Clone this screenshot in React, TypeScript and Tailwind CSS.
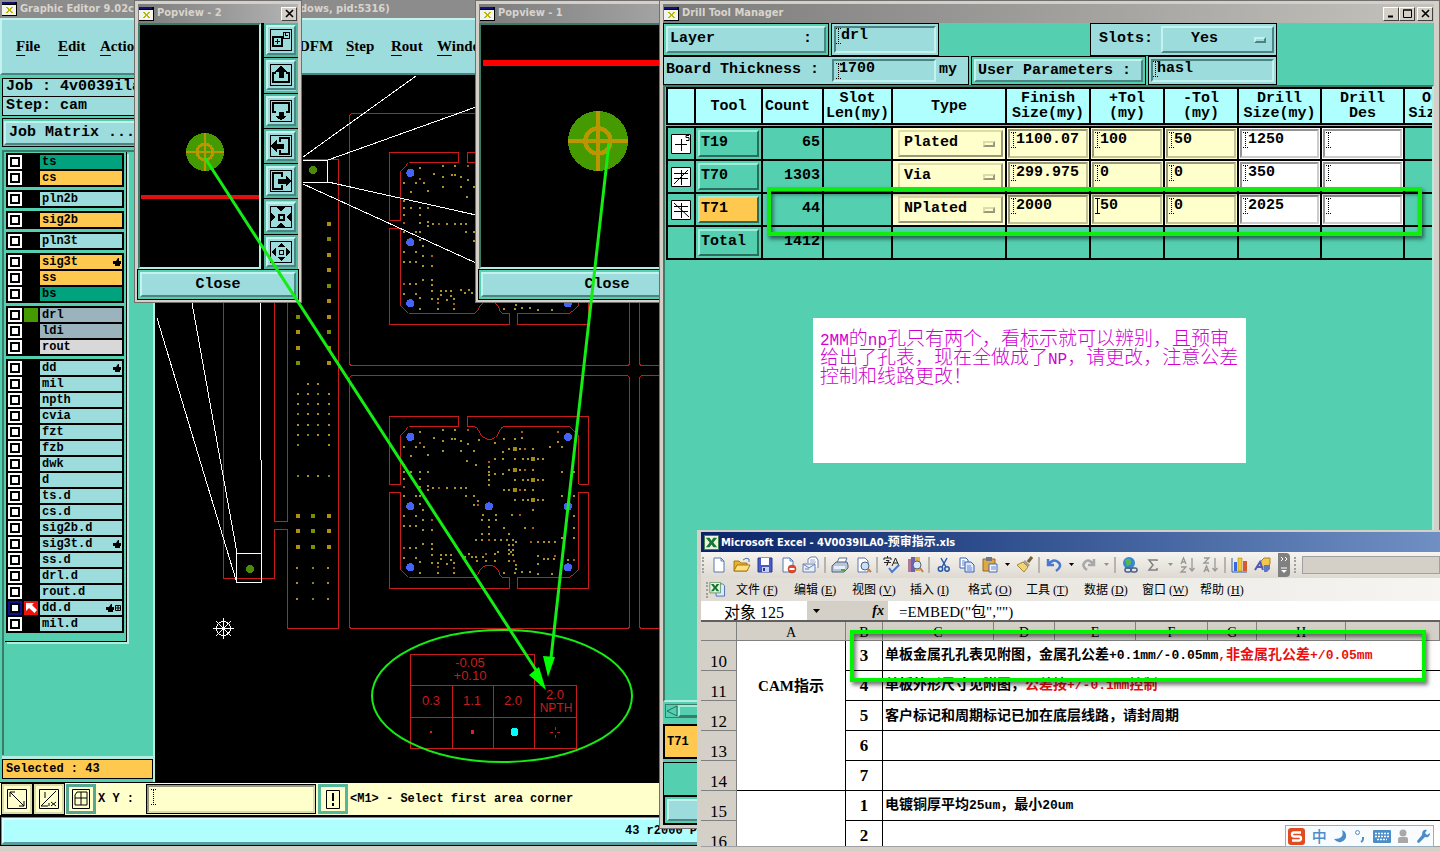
import type { ReactNode } from 'react'

const TEAL_RAISED = 'border-2 border-t-[#c4f2ee] border-l-[#c4f2ee] border-r-[#4c8484] border-b-[#4c8484] bg-[#9cdcdc]'
const TEAL_SUNKEN = 'border-2 border-t-[#4c8484] border-l-[#4c8484] border-r-[#c4f2ee] border-b-[#c4f2ee] bg-[#9cdcdc]'
const MONO = "font-['Liberation_Mono',monospace] font-bold"
const TAHOMA = "font-['DejaVu_Sans_Condensed','DejaVu_Sans','Noto_Sans_CJK_SC',sans-serif] font-bold"

type Layer = { name: string; bg: string; hand?: boolean; grid?: boolean; swatch?: boolean; active?: boolean }

const LIGHT = 'bg-[#9cdcdc]'
const ORANGE = 'bg-[#ffc84f]'
const GREEN = 'bg-[#00a37e]'

const layerGroups: Layer[][] = [
  [{ name: 'ts', bg: GREEN }, { name: 'cs', bg: ORANGE }],
  [{ name: 'pln2b', bg: LIGHT }],
  [{ name: 'sig2b', bg: ORANGE }],
  [{ name: 'pln3t', bg: LIGHT }],
  [{ name: 'sig3t', bg: ORANGE, hand: true }, { name: 'ss', bg: ORANGE }, { name: 'bs', bg: GREEN }],
  [
    { name: 'drl', bg: 'bg-[#9ab3bc]', swatch: true },
    { name: 'ldi', bg: 'bg-[#9ab3bc]' },
    { name: 'rout', bg: 'bg-[#d8d8d8]' },
  ],
  [
    { name: 'dd', bg: LIGHT, hand: true },
    { name: 'mil', bg: LIGHT },
    { name: 'npth', bg: LIGHT },
    { name: 'cvia', bg: LIGHT },
    { name: 'fzt', bg: LIGHT },
    { name: 'fzb', bg: LIGHT },
    { name: 'dwk', bg: LIGHT },
    { name: 'd', bg: LIGHT },
    { name: 'ts.d', bg: LIGHT },
    { name: 'cs.d', bg: LIGHT },
    { name: 'sig2b.d', bg: LIGHT },
    { name: 'sig3t.d', bg: LIGHT, hand: true },
    { name: 'ss.d', bg: LIGHT },
    { name: 'drl.d', bg: LIGHT },
    { name: 'rout.d', bg: LIGHT },
    { name: 'dd.d', bg: LIGHT, hand: true, grid: true, active: true },
    { name: 'mil.d', bg: LIGHT },
  ],
]

function AppIcon() {
  return (
    <svg width="15" height="14" viewBox="0 0 15 14" className="shrink-0" shapeRendering="crispEdges">
      <rect width="15" height="14" fill="#000" />
      <rect width="13" height="2" fill="#101070" />
      <rect y="3" width="14" height="10" fill="#f4f4ee" />
      <path d="M4 5h2v1h1v1h1V6h1V5h2v1h-1v1H9v2h1v1h1v1H9v-1H8V9H7v1H6v1H4v-1h1V9h1V7H5V6H4z" fill="#b8b800" />
    </svg>
  )
}

function TitleButton({ label, children }: { label: string; children: ReactNode }) {
  return (
    <button aria-label={label} className="flex h-[14px] w-4 items-center justify-center border border-t-white border-l-white border-r-[#404040] border-b-[#404040] bg-[#d4d0c8]">
      <svg width="9" height="9" viewBox="0 0 9 9" stroke="#000" fill="none">{children}</svg>
    </button>
  )
}

const cross = <path d="M1 1l7 7M8 1L1 8" strokeWidth="1.6" />

/* ---------- PCB drawing ---------- */

const pads = `240,276 282,294 309,270 345,270 384,270 417,300 337,297 346,297 363,303 309,303 384,312 192,321 228,321 240,309 252,321
213,348 264,345 309,333 363,333 402,333 381,363 408,376 447,366 447,381 447,396 447,405 447,420 447,435 466,309 493,297 525,297
547,276 547,294 489,336 507,327 466,357 489,357 466,402 489,402 541,327 555,327 579,327 525,357 549,357 564,357 594,357 609,357
507,390 541,390 555,390 579,390 525,420 549,420 564,420 594,420 609,420 493,450 507,450 541,450 555,450 579,450 525,480 549,480
564,480 594,480 609,480 579,510 654,276 654,306 666,321 630,322 666,396 702,396 192,375 192,396 192,417 192,440 213,396 240,396
264,396 240,417 240,440 264,438 264,450 279,444 297,444 321,444 346,444 363,444 378,444 378,468 402,468 414,483 402,496 414,496
192,469 228,469 240,469 240,492 248,510 192,528 228,528 248,540 276,540 192,558 210,558 228,558 248,570 276,570 248,612 276,612
276,627 192,624 210,624 228,624 276,645 192,654 228,654 240,666 276,670 294,669 294,681 294,699 240,699 303,645 318,645 333,645
303,657 333,660 342,669 342,684 342,699 321,672 363,642 387,642 375,651 396,651 408,651 429,651 438,642 411,663 438,663 465,663
465,642 474,636 429,524 468,524 516,524 540,524 426,540 447,540 468,540 447,561 426,582 447,582 408,600 426,600 447,600 465,600
483,600 501,600 519,600 528,606 507,582 493,564 555,564 579,564 507,615 519,615 507,630 513,636 519,630 507,642 519,645 507,663
522,663 528,675 528,687 525,699 492,699 546,696 570,696 594,702 636,702 573,606 594,606 612,606 627,606 646,606 594,648 612,657
624,657 641,657 646,648 594,672 666,469 702,469 702,528 702,564 666,594 702,594 684,660 702,660`
  .split(/\s+/)
  .map((p) => p.split(',').map(Number))

const bigPads = [[525, 327], [579, 358], [525, 389], [579, 420], [525, 450], [579, 480]]
const fiducials = [[211, 291], [684, 291], [211, 499], [447, 499], [684, 499], [211, 682], [684, 682]]

function Board({ y }: { y: number }) {
  return (
    <g transform={`translate(340 ${y}) scale(.33333)`}>
      <g fill="none" stroke="#c81c1c" strokeWidth="3">
        <path d="M356 230H148V433H182V286L206 260H356Z" />
        <path d="M382 230V260H401q10 0 15 12q10 26 32 26t30-24q5-14 15-14H690L716 286V433H746V230Z" />
        <path d="M148 457H182V688L206 712H404q8-4 14-18q10-18 29-18t29 18q4 18 12 18H509V745H148Z" />
        <path d="M532 712H690L716 688V457H746V745H532Z" />
      </g>
      {pads.map(([px, py], i) => (
        <rect key={i} x={px - 3} y={py - 3} width="6" height="6" fill={i % 9 === 4 ? '#a85a20' : '#a89428'} />
      ))}
      {bigPads.map(([px, py], i) => (
        <rect key={i} x={px - 6} y={py - 6} width="12" height="12" fill="#a08a10" />
      ))}
      {fiducials.map(([px, py], i) => (
        <circle key={i} cx={px} cy={py} r="12" fill="#4464f8" />
      ))}
    </g>
  )
}

const stripPads = [
  ...[224, 239, 255, 270, 286, 301, 317, 332, 348, 363].map((y) => [329, y, 4]),
  ...[317, 332, 348, 363].map((y) => [298, y, 4]),
  ...[394, 404, 414, 425, 435, 476].flatMap((y) => [298, 308, 318, 329].map((x) => [x, y, 2])),
  [308, 384, 2], [318, 384, 2], [298, 445, 2], [329, 445, 2],
  ...[516, 531, 547].flatMap((y) => [298, 313, 329].map((x) => [x, y, 4])),
  ...[568, 583, 599].flatMap((y) => [297, 313, 328].map((x) => [x, y, 2])),
]

function PcbCanvas() {
  return (
    <svg className="h-full w-full" role="img" aria-label="PCB panel">
      <g transform="translate(-155 -75)" shapeRendering="crispEdges">
        <g fill="none" stroke="#c81c1c">
          <path d="M223.500 303V578.500H274.500V529.500H287.500V628.500H338.500V159.500H303M274.500 303V521.500H287.500V303" />
          <rect x="349.500" y="113.500" width="280" height="252" rx="3" />
          <rect x="349.500" y="375.500" width="280" height="253" rx="3" />
          <rect x="639.500" y="113.500" width="280" height="252" rx="3" />
          <rect x="639.500" y="375.500" width="280" height="253" rx="3" />
        </g>
        <Board y={76} />
        <Board y={340} />
        {stripPads.map(([x, y, s], i) => (
          <rect key={i} x={x - s / 2} y={y - s / 2} width={s} height={s} fill={i % 3 === 1 ? '#7c8c08' : '#b08c18'} />
        ))}
        <g fill="none" stroke="#fff">
          <path d="M303 157L416 76M328 160L476 107M328 182L476 215M303 184L476 263M303 160.500H327.500V182.500H303" />
          <path d="M157 318L236 580M192 303L237 553M260.500 303V460M261.500 460V582M236.500 553.500H261.500V582.500H236.500Z" />
          <path d="M213 628.500H234M223.500 618V639M216 621L231 636M231 621L216 636" />
          <circle cx="223.500" cy="628.500" r="7" />
        </g>
        <circle cx="250" cy="569" r="4" fill="#4a8c08" />
        <circle cx="313" cy="170" r="4" fill="#4a8c08" />
        <g fill="none" stroke="#c81c1c">
          <path d="M410.500 685.500V654.500H534.500V685.500M410.500 685.500H576.500V748.500H410.500ZM410.500 717.500H576.500M452.500 685.500V748M493.500 685.500V748M534.500 685.500V748" />
          <path d="M555 727v3M555 735v3M550 732h3M557 732h3" />
        </g>
        <rect x="430" y="731" width="2" height="2" fill="#e02020" />
        <circle cx="472.500" cy="732" r="2" fill="#e02020" />
        <circle cx="514.500" cy="732" r="4" fill="#00ffff" />
        <g fill="#c81c1c" textAnchor="middle" className="font-['Liberation_Sans',sans-serif] text-[13px]">
          <text x="470" y="667">-0.05</text>
          <text x="470" y="680">+0.10</text>
          <text x="431" y="705">0.3</text>
          <text x="472" y="705">1.1</text>
          <text x="513" y="705">2.0</text>
          <text x="555" y="699">2.0</text>
          <text x="556" y="712" className="text-[12px]">NPTH</text>
        </g>
      </g>
    </svg>
  )
}

/* ---------- main editor window ---------- */

function LayerRow({ layer }: { layer: Layer }) {
  return (
    <label className="flex h-4 items-center gap-[2px]">
      <input
        type="checkbox"
        aria-label={layer.name}
        className={`h-[14px] w-[14px] shrink-0 appearance-none border-2 bg-white shadow-[inset_0_0_0_2px_#000] ${layer.active ? 'border-[#101090]' : 'border-white'}`}
      />
      <span className={`h-[14px] w-[14px] shrink-0 ${layer.swatch ? 'bg-[#459a00]' : layer.active ? 'bg-[#f01010]' : ''}`}>
        {layer.active && (
          <svg width="14" height="14" viewBox="0 0 14 14" fill="#fff">
            <path d="M2 2h8L8 4l5 5-2.500 3L5 7l-3 3z" />
          </svg>
        )}
      </span>
      <span className={`flex h-[14px] flex-1 items-center pr-px pl-[2px] text-[12px] leading-[14px] ${layer.bg}`}>
        <span className="flex-1">{layer.name}</span>
        {layer.hand && (
          <svg width="8" height="8" viewBox="0 0 8 8"><path d="M0 3h3l2-3h1v3h2v3H7v2H2V6H0z" /></svg>
        )}
        {layer.grid && (
          <svg width="6" height="6" viewBox="0 0 6 6" className="ml-px" fill="none" stroke="#000"><path d="M.5.5h5v5h-5zM3 0v6M0 3h6" /></svg>
        )}
      </span>
    </label>
  )
}

function Sidebar() {
  return (
    <aside className={`flex w-[155px] shrink-0 flex-col border-r-2 border-[#b4ece0] bg-[#54cfb0] pt-[3px] pl-[2px] ${MONO}`}>
      <div className="flex h-[19px] items-center border border-black bg-[#9cdcdc] pl-[3px] text-[15px] whitespace-nowrap">Job : 4v0039ila0</div>
      <div className="flex h-[19px] items-center border border-t-0 border-black bg-[#9cdcdc] pl-[3px] text-[15px]">Step: cam</div>
      <div className="mt-[2px] border border-black p-px">
        <button className={`h-6 w-full pl-[3px] text-left text-[15px] leading-none ${TEAL_RAISED}`}>Job Matrix ...</button>
      </div>
      <div className="mt-[3px] flex-1 border-t-2 border-l-2 border-[#3c7a6a]">
        <div className="ml-px flex w-[122px] flex-col gap-[3px] border-r border-b border-black pt-px pb-2 shadow-[2px_2px_0_#b4ece0]">
          {layerGroups.map((group, i) => (
            <div key={i} className="mr-[2px] ml-px bg-black px-[2px] py-px">
              {group.map((layer) => <LayerRow key={layer.name} layer={layer} />)}
            </div>
          ))}
        </div>
      </div>
      <div className="mt-1 mb-[3px] flex h-5 items-center border border-black bg-[#ffc84f] pl-[3px] text-[12px] shadow-[0_-3px_0_#b4ece0]">Selected : 43</div>
    </aside>
  )
}

function CommandBar() {
  const btn = 'flex w-[30px] items-center justify-center border-2 border-[#dcdca8] bg-[#ffffcc] outline outline-black'
  return (
    <div className={`flex h-[34px] items-stretch gap-[2px] border-y border-black bg-[#ffffcc] py-px pl-[2px] text-[12px] ${MONO}`}>
      <button aria-label="Zoom area" className={btn}>
        <svg width="20" height="20" fill="none" stroke="#000"><path d="M.5.5h19v19H.5zM3 3l14 14M3 8V3h5M17 12v5h-5" /></svg>
      </button>
      <button aria-label="Measure angle" className={btn}>
        <svg width="20" height="20" fill="none" stroke="#000"><path d="M.5.5h19v19H.5zM2 17L17 2M2 17h7M6 3v6M12 13l5 4M17 13l-5 4M10 14v3" /></svg>
      </button>
      <button aria-label="Grid" className="flex w-[30px] items-center justify-center border-[3px] border-[#54a890] bg-[#ffffcc]">
        <svg width="18" height="20" fill="none" stroke="#000"><path d="M.5.5h17v19H.5zM5 3h10v13H3V6zM9 3v13M3 9h12" /></svg>
      </button>
      <label htmlFor="xy" className="flex w-[46px] items-center whitespace-nowrap">X Y :</label>
      <span className="relative flex w-[170px] border border-black">
        <input id="xy" className="w-full border-2 border-t-[#98987c] border-l-[#98987c] border-r-[#dcdcac] border-b-[#dcdcac] bg-[#ffffcc] pl-2 outline-none" />
        <Caret />
      </span>
      <button aria-label="Alert" className="flex w-[30px] items-center justify-center border-[3px] border-[#54b898] bg-[#ffffcc]">
        <svg width="14" height="19" fill="none" stroke="#000"><path d="M.5.5h13v18H.5z" /><path d="M7 3v8M7 13v3" strokeWidth="2" /></svg>
      </button>
      <span className="flex items-center whitespace-nowrap">&lt;M1&gt; - Select first area corner</span>
    </div>
  )
}

/* dotted text cursor of an unfocused field */
function Caret({ solid }: { solid?: boolean }) {
  return (
    <svg width="5" height="16" className="pointer-events-none absolute top-1 left-1" fill="none" stroke="#000">
      <path d="M0 .5h5M2.500 1v14M0 15.500h5" strokeDasharray={solid ? undefined : '1 1'} />
    </svg>
  )
}

const MENUS = [
  ['File', 'w-[42px]'],
  ['Edit', 'w-[42px]'],
  ['Actions', 'w-[199px]'],
  ['DFM', 'w-[47px]'],
  ['Step', 'w-[45px]'],
  ['Rout', 'w-[46px]'],
  ['Windows', 'w-[70px]'],
]

function EditorWindow() {
  return (
    <main className="flex h-full flex-col">
      <header className={`flex h-[18px] items-center bg-[#8c8c8c] pl-[2px] text-[11px] text-[#d8d4cc] ${TAHOMA}`}>
        <AppIcon />
        <span className="w-[283px] pl-[3px] whitespace-nowrap">Graphic Editor 9.02c1</span>
        <span>dows, pid:5316)</span>
      </header>
      <nav className="flex h-[57px] items-center border-2 border-t-[#c4f2ee] border-l-[#c4f2ee] border-b-[#4c8484] bg-[#9cdcdc] pl-[14px] font-['Liberation_Serif',serif] text-[15px] font-bold">
        {MENUS.map(([name, width]) => (
          <button key={name} className={`shrink-0 text-left ${width}`}>
            {name === 'DFM' ? name : <><span className="underline underline-offset-4">{name[0]}</span>{name.slice(1)}</>}
          </button>
        ))}
      </nav>
      <div className="flex min-h-0 flex-1">
        <Sidebar />
        <div className="min-w-0 flex-1 overflow-hidden bg-black"><PcbCanvas /></div>
      </div>
      <CommandBar />
      <footer className={`flex h-[30px] items-center border border-black bg-[#54a0a0] p-px text-[12px] ${MONO}`}>
        <div className="flex h-full w-full items-center border-2 border-t-[#dcffff] border-l-[#dcffff] border-b-[#5c9c9c] bg-[#b0ffff] pl-[621px] whitespace-nowrap">43 r2000 Pos</div>
      </footer>
      <div className="h-[5px] bg-[#d4d0c8]" />
    </main>
  )
}

/* ---------- popviews ---------- */

const popIcons: [string, ReactNode][] = [
  ['Pan to window', <><path d="M3 8h9v9H3z" strokeWidth="2" /><path d="M13.500 3.500h6v6h-6zM15.500 3.500v3h2M5 12.500h5M7.500 10v5" /></>],
  ['Pan up', <><path d="M6 9H3v9h16V9h-3" strokeWidth="2" /><path d="M11 2l5 5h-3v6H9V7H6z" fill="#000" /></>],
  ['Pan down', <><path d="M6 12H3V3h16v9h-3" strokeWidth="2" /><path d="M11 20l5-4h-3v-4H9v4H6z" fill="#000" /></>],
  ['Pan left', <><path d="M10 7V3h9v16h-9v-4" strokeWidth="2" /><path d="M1 11l5-5v3h7v4H6v3z" fill="#000" /></>],
  ['Pan right', <><path d="M12 7V3H3v16h9v-4" strokeWidth="2" /><path d="M21 11l-5-5v3H8v4h8v3z" fill="#000" /></>],
  ['Zoom in', <><path d="M9 9h5v5H9z" strokeWidth="2" /><path d="M6 1h10l-5 4zM6 21h10l-5-4zM1 6v10l4-5zM21 6v10l-4-5z" fill="#000" stroke="none" /></>],
  ['Zoom out', <><path d="M9.500 9.500h4v4h-4z" /><path d="M7 6h8l-4-4zM7 16h8l-4 4zM6 7v8l-5-4zM16 7v8l5-4z" fill="#000" stroke="none" /></>],
]

function Target({ cx, cy, r }: { cx: number; cy: number; r: number }) {
  return (
    <g fill="none" stroke="#bc9600" shapeRendering="crispEdges">
      <circle cx={cx} cy={cy} r={r} fill="#459a00" stroke="none" />
      <circle cx={cx} cy={cy} r={r * 0.42} strokeWidth={r / 7} />
      <path d={`M${cx - r} ${cy}H${cx + r}M${cx} ${cy - r}V${cy + r}`} strokeWidth={r / 7} />
    </g>
  )
}

function Popview({ title, className, tools, children }: { title: string; className: string; tools?: boolean; children: ReactNode }) {
  return (
    <section className={`absolute top-0 flex h-[303px] flex-col border-4 border-[#d4d0c8] outline -outline-offset-1 outline-[#707070] ${className}`}>
      <header className={`flex h-[19px] shrink-0 items-center bg-linear-to-r from-[#7c7c7c] to-[#b4b4b4] px-px text-[11px] text-[#d8d4cc] ${TAHOMA}`}>
        <AppIcon />
        <span className="flex-1 pl-[3px]">{title}</span>
        {tools && <TitleButton label="Close window">{cross}</TitleButton>}
      </header>
      <div className="flex min-h-0 flex-1 bg-black">
        <div className="min-w-0 flex-1 border-2 border-t-[#3c7a6a] border-l-[#3c7a6a] border-r-[#b4ece0] border-b-[#b4ece0]">
          <svg className="h-full w-full">{children}</svg>
        </div>
        {tools && (
          <div className="ml-[3px] flex w-[34px] flex-col gap-px">
            {popIcons.map(([label, icon]) => (
              <button key={label} aria-label={label} className="flex flex-1 items-center justify-center border-2 border-[#54b8a0] bg-[#9cdcdc]">
                <span className={`flex h-[30px] w-[30px] items-center justify-center ${TEAL_RAISED}`}>
                  <svg width="22" height="22" viewBox="0 0 22 22" fill="none" stroke="#000" shapeRendering="crispEdges"><path d="M.5.500h21v21H.5z" />{icon}</svg>
                </span>
              </button>
            ))}
          </div>
        )}
      </div>
      <div className="mt-px bg-[#54cfb0] p-[2px] outline outline-black">
        <button className={`block h-[25px] w-full text-[15px] leading-none ${TEAL_RAISED} ${MONO}`}>Close</button>
      </div>
    </section>
  )
}

/* ---------- drill tool manager ---------- */

const tools = [
  { id: 'T19', count: 65, type: 'Plated', finish: '1100.07', plus: '100', minus: '50', drill: '1250', sym: <path d="M4 10.500h12M10.500 5v12M18 1.500h-3v2h3v3h-3" /> },
  { id: 'T70', count: 1303, type: 'Via', finish: '299.975', plus: '0', minus: '0', drill: '350', sym: <path d="M3 6.500h14M3 11.500h14M10.500 3v15M3 17L17 3" /> },
  { id: 'T71', count: 44, type: 'NPlated', finish: '2000', plus: '50', minus: '0', drill: '2025', sym: <path d="M3 6.500h14M3 11.500h14M10.500 3v15M3 3l15 14" /> },
]

const headers = ['', 'Tool', 'Count', 'Slot\nLen(my)', 'Type', 'Finish\nSize(my)', '+Tol\n(my)', '-Tol\n(my)', 'Drill\nSize(my)', 'Drill\nDes', 'Outer\nSize(my)']

function CellInput({ label, value, white, focus }: { label: string; value: string; white?: boolean; focus?: boolean }) {
  return (
    <div className={`relative p-px ${white ? 'bg-white' : 'bg-[#ffffcc]'} ${focus ? 'outline-2 outline-black' : ''}`}>
      <input
        aria-label={label}
        defaultValue={value}
        className={`block h-[29px] w-full border-2 pb-2 pl-[6px] leading-[17px] outline-none ${white ? 'border-t-[#949494] border-l-[#949494] border-r-[#cccccc] border-b-[#cccccc]' : 'border-t-[#98987c] border-l-[#98987c] border-r-[#c4c49c] border-b-[#c4c49c]'}`}
      />
      <Caret solid={focus} />
    </div>
  )
}

function Marker({ cream }: { cream?: boolean }) {
  return (
    <span className={`pointer-events-none absolute right-2 h-[6px] w-3 border-2 ${cream ? 'border-t-[#dcdcac] border-l-[#dcdcac] border-r-[#98987c] border-b-[#98987c]' : 'border-t-[#c4f2ee] border-l-[#c4f2ee] border-r-[#4c8484] border-b-[#4c8484]'}`} />
  )
}

function DrillTable() {
  const td = 'border-2 border-black p-0'
  return (
    <table className="w-[820px] table-fixed border-collapse text-[15px]">
      <colgroup>
        <col className="w-[28px]" /><col className="w-[67px]" /><col className="w-[61px]" /><col className="w-[69px]" />
        <col className="w-[114px]" /><col className="w-[84px]" /><col className="w-[74px]" /><col className="w-[74px]" />
        <col className="w-[83px]" /><col className="w-[83px]" /><col />
      </colgroup>
      <thead>
        <tr className="h-[36px] bg-[#b0ffff]">
          {headers.map((h, i) => (
            <th key={i} className={`border-2 border-black p-0 leading-[15px] whitespace-pre ${h === 'Count' ? 'pl-[2px] text-left' : ''}`}>{h}</th>
          ))}
        </tr>
      </thead>
      <tbody>
        <tr className="h-[3px]"><td colSpan={11} className="p-0" /></tr>
        {tools.map((t) => (
          <tr key={t.id} className="h-[33px]">
            <td className={td}>
              <svg width="20" height="20" className="mx-auto block bg-white" fill="none" stroke="#000"><path d="M.5.500h19v19H.5z" />{t.sym}</svg>
            </td>
            <td className={`${td} px-[2px]`}>
              <button className={`block h-[27px] w-full border-2 border-t-[#a0ecd8] border-l-[#a0ecd8] border-r-[#2c6c5c] border-b-[#2c6c5c] pl-px text-left ${t.id === 'T71' ? 'bg-[#ffc84f]' : ''}`}>{t.id}</button>
            </td>
            <td className={`${td} pr-[2px] text-right`}>{t.count}</td>
            <td className={td} />
            <td className={`${td} bg-[#ffffcc]`}>
              <span className="relative mr-[2px] ml-[5px] flex items-center">
                <select aria-label={`${t.id} type`} defaultValue={t.type} className="h-[27px] w-full appearance-none border-2 border-t-[#dcdcac] border-l-[#dcdcac] border-r-[#98987c] border-b-[#98987c] pl-1">
                  <option>Plated</option><option>NPlated</option><option>Via</option>
                </select>
                <Marker cream />
              </span>
            </td>
            <td className={td}><CellInput label={`${t.id} finish size`} value={t.finish} /></td>
            <td className={td}><CellInput label={`${t.id} plus tolerance`} value={t.plus} focus={t.id === 'T71'} /></td>
            <td className={td}><CellInput label={`${t.id} minus tolerance`} value={t.minus} /></td>
            <td className={td}><CellInput label={`${t.id} drill size`} value={t.drill} white /></td>
            <td className={td}><CellInput label={`${t.id} drill designator`} value="" white /></td>
            <td className={td} />
          </tr>
        ))}
        <tr className="h-[33px]">
          <td className={td} />
          <td className={`${td} px-[2px]`}>
            <button className="block h-[27px] w-full border-2 border-t-[#a0ecd8] border-l-[#a0ecd8] border-r-[#2c6c5c] border-b-[#2c6c5c] pl-px text-left">Total</button>
          </td>
          <td className={`${td} pr-[2px] text-right`}>1412</td>
          {headers.slice(3).map((h) => <td key={h} className={td} />)}
        </tr>
      </tbody>
    </table>
  )
}

function DrillManager() {
  const box = 'border border-black bg-[#9cdcdc] p-[2px]'
  return (
    <section className="absolute top-0 right-0 left-[659px] flex h-[829px] flex-col border-4 border-r-[6px] border-[#d4d0c8] bg-[#54cfb0] outline -outline-offset-1 outline-[#707070]">
      <header className={`flex h-[19px] shrink-0 items-center bg-linear-to-r from-[#7c7c7c] to-[#c4c2bc] px-px text-[11px] text-[#d8d4cc] ${TAHOMA}`}>
        <AppIcon />
        <span className="flex-1 pl-[3px]">Drill Tool Manager</span>
        <TitleButton label="Minimize"><path d="M1 7.500h5" strokeWidth="2" /></TitleButton>
        <TitleButton label="Maximize"><path d="M.5 1h8v7.500h-8zM0 1h9" /></TitleButton>
        <span className="w-[2px]" />
        <TitleButton label="Close">{cross}</TitleButton>
      </header>
      <div className={`flex min-h-0 flex-1 flex-col text-[15px] ${MONO}`}>
        <div className="flex h-[33px] gap-[2px]">
          <div className="w-[166px] border border-black p-[2px]">
            <button className={`flex h-full w-full items-center justify-between pr-3 pl-[2px] ${TEAL_RAISED}`}><span>Layer</span><span>:</span></button>
          </div>
          <div className={`relative w-[108px] ${box}`}>
            <input aria-label="Layer" defaultValue="drl" className={`block h-full w-full pb-2 pl-[5px] outline-none ${TEAL_SUNKEN}`} />
            <Caret />
          </div>
          <div className={`ml-[149px] flex w-[187px] items-center pl-2 ${box}`}>
            <label htmlFor="slots" className="w-[62px]">Slots:</label>
            <span className="relative flex h-full flex-1 items-center">
              <select id="slots" defaultValue="Yes" className={`h-full w-full appearance-none pl-[28px] ${TEAL_RAISED}`}>
                <option>Yes</option><option>No</option>
              </select>
              <Marker />
            </span>
          </div>
        </div>
        <div className="flex h-[29px] gap-[2px]">
          <div className={`flex w-[306px] items-center ${box}`}>
            <label htmlFor="thickness" className="w-[166px] whitespace-nowrap">Board Thickness :</label>
            <span className="relative h-full w-[104px]">
              <input id="thickness" defaultValue="1700" className={`block h-full w-full pb-1 pl-[5px] outline-none ${TEAL_SUNKEN}`} />
              <Caret />
            </span>
            <span className="pl-[3px]">my</span>
          </div>
          <div className="w-[175px] border border-black p-[2px]">
            <button className={`h-full w-full pl-[2px] text-left leading-none whitespace-nowrap ${TEAL_RAISED}`}>User Parameters :</button>
          </div>
          <div className={`relative w-[129px] ${box}`}>
            <input aria-label="User parameters" defaultValue="hasl" className={`block h-full w-full pb-1 pl-1 outline-none ${TEAL_SUNKEN}`} />
            <Caret />
          </div>
        </div>
        <div className="flex-1 overflow-hidden border-2 border-t-[#3c7a6a] border-l-[#3c7a6a] border-r-[#b4ece0] border-b-[#b4ece0] pl-px">
          <DrillTable />
        </div>
        <div className="m-[2px] flex h-[14px] border border-[#3c7a6a]">
          <svg width="12" height="12"><path d="M11 1v10L1 6z" fill="#54cfb0" stroke="#24705c" /></svg>
          <div className="flex-1 border-2 border-[#a0ecd8] border-r-[#3c7a6a] border-b-[#3c7a6a]" />
        </div>
        <div className="mt-1 flex h-[35px] items-center border-2 border-black bg-[#ffc84f] pl-[2px] text-[12px]">T71</div>
        <div className="mt-[3px] h-[34px] border border-black" />
        <div className="h-[29px] border-2 border-t border-black p-[2px]">
          <button aria-label="Apply" className={`block h-full w-full ${TEAL_RAISED}`} />
        </div>
      </div>
    </section>
  )
}

/* ---------- spreadsheet window ---------- */

const page = <path d="M4 2h7l3 3v11H4z" fill="#fff" stroke="#5878b0" />
const ic: Record<string, ReactNode> = {
  New: <>{page}<path d="M11 2v3h3" fill="none" stroke="#5878b0" /></>,
  Open: <><path d="M1 15V5h5l2 2h6v8z" fill="#e8b030" stroke="#a87810" /><path d="M1 15l3-6h13l-3 6z" fill="#ffe080" stroke="#a87810" /><path d="M10 4q3-3 6-1v3" fill="none" stroke="#4870b0" /></>,
  Save: <><path d="M2 2h14v14H2z" fill="#4a5cc8" stroke="#283890" /><path d="M5 2h8v7H5z" fill="#fff" /><path d="M6 11h7v5H6z" fill="#c8d0f0" /><path d="M7 12h2v3H7z" fill="#283890" /></>,
  Permission: <>{page}<path d="M11 2v3h3" fill="none" stroke="#5878b0" /><circle cx="13" cy="13" r="4" fill="#e04830" stroke="#a83018" strokeWidth=".5" /><path d="M10.500 13h5" stroke="#fff" strokeWidth="2" /></>,
  Mail: <><path d="M6 7V3l3-2h5l2 3v8" fill="#fff" stroke="#6880b0" /><path d="M8 4h5M8 6h6" stroke="#98a8c8" /><path d="M1 8h12v8H1z" fill="#e8eef8" stroke="#6880b0" /><path d="M1 8l6 4 6-4M3 13h4" fill="none" stroke="#6880b0" /></>,
  Print: <><path d="M6 7l2-5h8l-2 5" fill="#fff" stroke="#607090" /><path d="M1 10l4-4h11l1 3v3l-4 4H1z" fill="#b8c4d8" stroke="#506080" /><path d="M3 10h11v3H3z" fill="#e8eef8" /><path d="M10 13h4v2h-4z" fill="#40b040" /></>,
  Preview: <>{page}<circle cx="11" cy="10" r="4" fill="#c8e0f8" stroke="#506080" /><path d="M14 13l3 3" stroke="#c08040" strokeWidth="2" /></>,
  Spelling: <><path d="M4.500 0v2M1 4V2h7v2M3 4.500h3l-1.500 2V9H3M1 6.500h7M9 10l3.500-8L16 10M10.500 7h4" fill="none" stroke="#202020" /><path d="M6 12l3 4 7-7" fill="none" stroke="#4878d0" strokeWidth="2" /></>,
  Research: <><path d="M2 3h3v13H2z" fill="#b07898" /><path d="M5 1h4v15H5z" fill="#7060b0" /><path d="M9 1h5v14H9z" fill="#e0b040" /><circle cx="11" cy="9" r="4" fill="#d8e8f8" stroke="#506080" /><path d="M14 12l3 4" stroke="#c08040" strokeWidth="2" /></>,
  Cut: <g fill="none" stroke="#2858a8" strokeWidth="1.500"><path d="M6 2l5 9M12 2l-5 9" /><circle cx="5.500" cy="13" r="2.200" /><circle cx="12" cy="13" r="2.200" /></g>,
  Copy: <><path d="M2 2h6l2 2v8H2z" fill="#fff" stroke="#3860b0" /><path d="M4 5h3M4 7h3M4 9h3" stroke="#6888c8" /><path d="M7 6h6l3 3v7H7z" fill="#dce8ff" stroke="#3860b0" /><path d="M9 10h4M9 12h5M9 14h5" stroke="#6888c8" /></>,
  Paste: <><path d="M2 3h12v12H2z" fill="#e0a840" stroke="#98681c" /><path d="M5 1h6v4H5z" fill="#707888" /><path d="M8 8h8v8H8z" fill="#f0f4ff" stroke="#4868a8" /><path d="M10 11h5M10 13h5" stroke="#6888c8" /></>,
  'Format painter': <><path d="M16 1l-4 5" stroke="#7c6030" strokeWidth="3" /><path d="M9 4l5 5-2 2-5-5z" fill="#a8a090" /><path d="M7 6l5 5-4 5-7-7z" fill="#f0d478" stroke="#a88830" /></>,
  Undo: <path d="M3 3v6h6M3 9q5-7 10-3t-2 9" fill="none" stroke="#4878d0" strokeWidth="2.500" />,
  Redo: <path d="M14 3v6H8M14 9Q9 2 5 6t2 8" fill="none" stroke="#a8a8a8" strokeWidth="2.500" />,
  Hyperlink: <><circle cx="8" cy="7" r="6" fill="#3888d0" /><path d="M4 4q5-3 6 1t-4 5z" fill="#58b850" /><g fill="none" stroke="#486088" strokeWidth="1.500"><rect x="4" y="12" width="6" height="4" rx="2" /><rect x="10" y="12" width="6" height="4" rx="2" /></g></>,
  Sum: <path d="M13 5V4H5l4 5-4 5h8v-2" fill="none" stroke="#808080" strokeWidth="1.500" />,
  'Sort ascending': <g fill="none" stroke="#989898" strokeWidth="1.300"><path d="M2 8l2.500-6L7 8M3 6h3M2 11h5l-5 5h5M13 2v13M10.500 12l2.500 3 2.500-3" /></g>,
  'Sort descending': <g fill="none" stroke="#989898" strokeWidth="1.300"><path d="M2 2h5L2 7h5M2 16l2.500-6L7 16M3 14h3M13 2v13M10.500 12l2.500 3 2.500-3" /></g>,
  Chart: <><path d="M1 2v14h15" fill="none" stroke="#3060a0" /><path d="M3 6h3v9H3z" fill="#3868e0" /><path d="M7 2h4v13H7z" fill="#f0c830" stroke="#a87810" strokeWidth=".5" /><path d="M12 5h4v10h-4z" fill="#d85830" /></>,
  Drawing: <><path d="M7 5l3-3h6v6l-3 3H7z" fill="#f0c850" stroke="#b08020" /><path d="M1 14L6 6l3 8M3 11h5" fill="none" stroke="#5058b8" strokeWidth="2" /><path d="M10 9h6v4l-3 3h-3z" fill="#6078c0" /></>,
}

const toolbar = ['New', 'Open', 'Save', 'Permission', 'Mail', '|', 'Print', 'Preview', '|', 'Spelling', 'Research', '|', 'Cut', 'Copy', 'Paste', 'v', 'Format painter', '|', 'Undo', 'v', 'Redo', 'v', '|', 'Hyperlink', 'Sum', 'v', 'Sort ascending', 'Sort descending', '|', 'Chart', 'Drawing']
const xlMenus = [['文件', 'F'], ['编辑', 'E'], ['视图', 'V'], ['插入', 'I'], ['格式', 'O'], ['工具', 'T'], ['数据', 'D'], ['窗口', 'W'], ['帮助', 'H']]

function Lat({ children }: { children: ReactNode }) {
  return <span className="font-['Liberation_Mono',monospace] text-[13px]">{children}</span>
}

const sheetRows: { row: number; n: number; text?: ReactNode }[] = [
  { row: 10, n: 3, text: <>单板金属孔孔表见附图，金属孔公差<Lat>+0.1mm/-0.05mm</Lat><span className="text-[#e81010]"><Lat>,</Lat>非金属孔公差<Lat>+/0.05mm</Lat></span></> },
  { row: 11, n: 4, text: <>单板外形尺寸见附图，<span className="text-[#e81010]">公差按<Lat>+/-0.1mm</Lat>控制</span></> },
  { row: 12, n: 5, text: '客户标记和周期标记已加在底层线路，请封周期' },
  { row: 13, n: 6 },
  { row: 14, n: 7 },
  { row: 15, n: 1, text: <>电镀铜厚平均<Lat>25um</Lat>，最小<Lat>20um</Lat></> },
  { row: 16, n: 2 },
]

function XlLogo({ doc }: { doc?: boolean }) {
  return (
    <svg width={doc ? 17 : 15} height="15" viewBox={doc ? '0 0 17 16' : '0 0 16 16'} className="shrink-0">
      {doc && <path d="M7 2h7l2 2v11H7z" fill="#dce8ff" stroke="#4870b8" />}
      <g transform={doc ? 'scale(.75)' : undefined}>
        <path d="M.5.500h15v15H.5z" fill="#e8f4e4" stroke="#408040" />
        <path d="M2 3h4l2 3 2-3h4l-4 5 4 5h-4l-2-3-2 3H2l4-5z" fill="#187830" />
      </g>
    </svg>
  )
}

function Excel() {
  const head = 'border-r border-b border-[#808080] bg-[#d4d0c8] font-normal'
  return (
    <section className="absolute top-[530px] right-0 bottom-0 left-[697px] flex flex-col overflow-hidden border-t-2 border-l-4 border-[#d4d0c8] bg-[#d4d0c8] font-['Liberation_Serif','Noto_Sans_CJK_SC',serif]">
      <header className={`flex h-5 shrink-0 items-center gap-[2px] bg-linear-to-r from-[#0a246a] to-[#7090c4] pl-[3px] text-[11px] text-white ${TAHOMA}`}>
        <XlLogo />
        <span>Microsoft Excel - 4V0039ILA0-<span className="text-[12px]">预审指示</span>.xls</span>
      </header>
      <div className="flex h-[26px] shrink-0 items-center overflow-hidden bg-linear-to-b from-[#f6f4f0] to-[#dedad2]">
        <span className="mx-px h-4 w-1 border-l-2 border-dotted border-[#a0a0a0]" />
        {toolbar.map((name, i) =>
          name === '|' ? (
            <span key={i} className="mx-[2px] h-4 w-[2px] shrink-0 bg-[#b8b4ac]" />
          ) : name === 'v' ? (
            <svg key={i} width="12" height="6" className="shrink-0"><path d="M4 1h5L6.500 4z" fill={i > 20 ? '#909090' : '#000'} /></svg>
          ) : (
            <button key={i} aria-label={name} className="flex w-[23px] shrink-0 justify-center"><svg width="18" height="18" viewBox="0 0 18 18">{ic[name]}</svg></button>
          ),
        )}
        <button aria-label="Toolbar options" className="ml-1 flex h-6 w-3 shrink-0 items-center justify-center rounded-r bg-[#808080]">
          <svg width="8" height="18" fill="none" stroke="#fff"><path d="M1 1l2 2-2 2M5 1l2 2-2 2M1 12h6" /><path d="M1 14h6l-3 3z" fill="#fff" stroke="none" /></svg>
        </button>
        <span className="mx-1 h-4 w-1 shrink-0 border-l-2 border-dotted border-[#a0a0a0]" />
        <span className="h-[18px] flex-1 border border-[#a0a0a0] bg-[#d4d0c8]" />
      </div>
      <nav className="flex h-[23px] shrink-0 items-center bg-linear-to-r from-[#e0dcd4] to-[#f6f5f2] pl-[5px] text-[12px]">
        <span className="mr-px h-4 w-[2px] border-l-2 border-dotted border-[#a0a0a0]" />
        <XlLogo doc />
        <span className="w-[10px]" />
        {xlMenus.map(([name, key]) => (
          <button key={key} className="w-[58px] text-left whitespace-nowrap">{name} (<u>{key}</u>)</button>
        ))}
      </nav>
      <div className="flex h-[19px] shrink-0 items-center text-[15px]">
        <input aria-label="Name box" defaultValue="对象 125" className="h-full w-[106px] bg-white pl-[23px] text-[16px] outline-none" />
        <svg width="18" height="6"><path d="M6 1h7L9.500 5z" /></svg>
        <i className="w-[63px] pr-1 text-right text-[14px] leading-none font-bold">fx</i>
        <input aria-label="Formula" defaultValue={'=EMBED("包","")'} className="h-full min-w-0 flex-1 bg-white pl-[11px] outline-none" />
      </div>
      <div className="min-h-0 flex-1 overflow-hidden border-t-2 border-[#606060] bg-white">
        <table className="w-full table-fixed border-separate border-spacing-0">
          <colgroup>
            <col className="w-[36px]" /><col className="w-[109px]" /><col className="w-[37px]" /><col className="w-[111px]" /><col className="w-[61px]" />
            <col className="w-[81px]" /><col className="w-[72px]" /><col className="w-[49px]" /><col className="w-[89px]" /><col />
          </colgroup>
          <thead>
            <tr className="h-[19px] text-[14px] leading-none">
              {['', 'A', 'B', 'C', 'D', 'E', 'F', 'G', 'H', ''].map((c, i) => <th key={i} className={`${head} p-0 pt-[3px]`}>{c}</th>)}
            </tr>
          </thead>
          <tbody>
            {sheetRows.map(({ row, n, text }) => (
              <tr key={row} className="h-[30px]">
                <th className={`${head} p-0 align-bottom text-[17px] leading-4`}>{row}</th>
                {row === 10 && <td rowSpan={5} className="border-r border-b border-black p-0 pb-[58px] text-center text-[15px] font-bold">CAM指示</td>}
                {row === 15 && <td rowSpan={2} className="border-r border-black p-0" />}
                <td className="border-r border-b border-black p-0 text-center text-[17px] leading-5 font-bold">{n}</td>
                <td colSpan={7} className="border-b border-black p-0 pl-[2px] text-[14px] leading-5 font-bold whitespace-nowrap">{text}</td>
              </tr>
            ))}
          </tbody>
        </table>
      </div>
      <div className="h-[5px] shrink-0 border-t border-[#a0a0a0]" />
    </section>
  )
}

function ImeBar() {
  const b = '#4c8cc8'
  return (
    <div className="absolute right-[6px] bottom-1 flex h-[22px] w-[149px] items-center justify-between border border-[#98b0c0] bg-[#f8fcff] px-[2px]">
      <svg width="17" height="17" viewBox="0 0 17 17"><rect width="17" height="17" rx="3" fill="#e04c20" /><path d="M13 4.500H6q-2 0-2 2t2 2h5q2 0 2 2t-2 2H4" fill="none" stroke="#fff" strokeWidth="2.300" /></svg>
      <span className="font-['Noto_Sans_CJK_SC',sans-serif] text-[15px] leading-4 font-medium text-[#4c8cc8]">中</span>
      <svg width="14" height="14"><path d="M9 1q3 9-8 9q3 4 7 3q6-2 5-8q-1-3-4-4z" fill={b} /></svg>
      <svg width="12" height="14" fill="none" stroke={b}><circle cx="3.500" cy="3.500" r="2" /><path d="M9 8v2q0 2-2 3" strokeWidth="2" /></svg>
      <svg width="18" height="13"><rect width="18" height="13" rx="1" fill={b} /><path d="M2 3.500h14M2 6.500h14M4 9.500h10" stroke="#fff" strokeWidth="1.500" strokeDasharray="2 1" /></svg>
      <svg width="12" height="15" fill="#a8a8a8"><circle cx="6" cy="4" r="3.500" /><path d="M1 14V10q0-2 2-2h6q2 0 2 2v4z" /></svg>
      <svg width="15" height="15" viewBox="0 0 15 15"><path d="M14 4l-3 2-2-2 2-3q-5-1-5 5l-5 6q0 2 2 2l6-6q5 1 5-4z" fill={b} /></svg>
    </div>
  )
}

/* latin run inside the note; zero leading keeps it from stretching the line */
function Half({ children }: { children: ReactNode }) {
  return <span className="font-['Liberation_Mono',monospace] text-[16px] leading-[0] font-normal">{children}</span>
}

/* green marks drawn on top of the desktop */
function Markup() {
  return (
    <>
      <svg className="pointer-events-none absolute inset-0 h-full w-full" fill="none" stroke="#14ec14" strokeWidth="3">
        <path d="M205 158L536 670M609 143L551 658" />
        <ellipse cx="502" cy="696" rx="130" ry="66" strokeWidth="2" />
        <path d="M546 690L529 675L539 667ZM548 677L543 656L555 657Z" fill="#00ff00" stroke="none" />
      </svg>
      <div className="pointer-events-none absolute top-[187px] left-[767px] h-[49px] w-[655px] border-4 border-[#10ec10] shadow-[2px_3px_4px_#0008,inset_2px_3px_4px_#0008]" />
      <div className="pointer-events-none absolute top-[630px] left-[850px] h-[52px] w-[576px] border-4 border-[#00f400] shadow-[2px_3px_4px_#0008,inset_2px_3px_4px_#0008]" />
    </>
  )
}

export default function App() {
  return (
    <div className="relative h-screen w-full overflow-hidden bg-[#d4d0c8] text-black">
      <EditorWindow />
      <Popview title="Popview - 2" className="left-[134px] w-[168px]" tools>
        <Target cx={65} cy={127} r={19} />
        <path d="M1 172H119" stroke="#e01010" strokeWidth="4" />
      </Popview>
      <Popview title="Popview - 1" className="left-[475px] w-[264px]">
        <path d="M2 38H260" stroke="#f00" strokeWidth="6" />
        <Target cx={117} cy={116} r={30} />
      </Popview>
      <DrillManager />
      <p className="absolute top-[318px] left-[813px] h-[145px] w-[433px] bg-white px-[7px] py-[9px] font-['Noto_Sans_CJK_SC',sans-serif] text-[19px] leading-[19px] font-light whitespace-nowrap text-[#d000d0]">
        <Half>2MM</Half>的<Half>np</Half>孔只有两个，看标示就可以辨别，且预审<br />
        给出了孔表，现在全做成了<Half>NP</Half>，请更改，注意公差<br />
        控制和线路更改！
      </p>
      <Excel />
      <ImeBar />
      <Markup />
    </div>
  )
}
